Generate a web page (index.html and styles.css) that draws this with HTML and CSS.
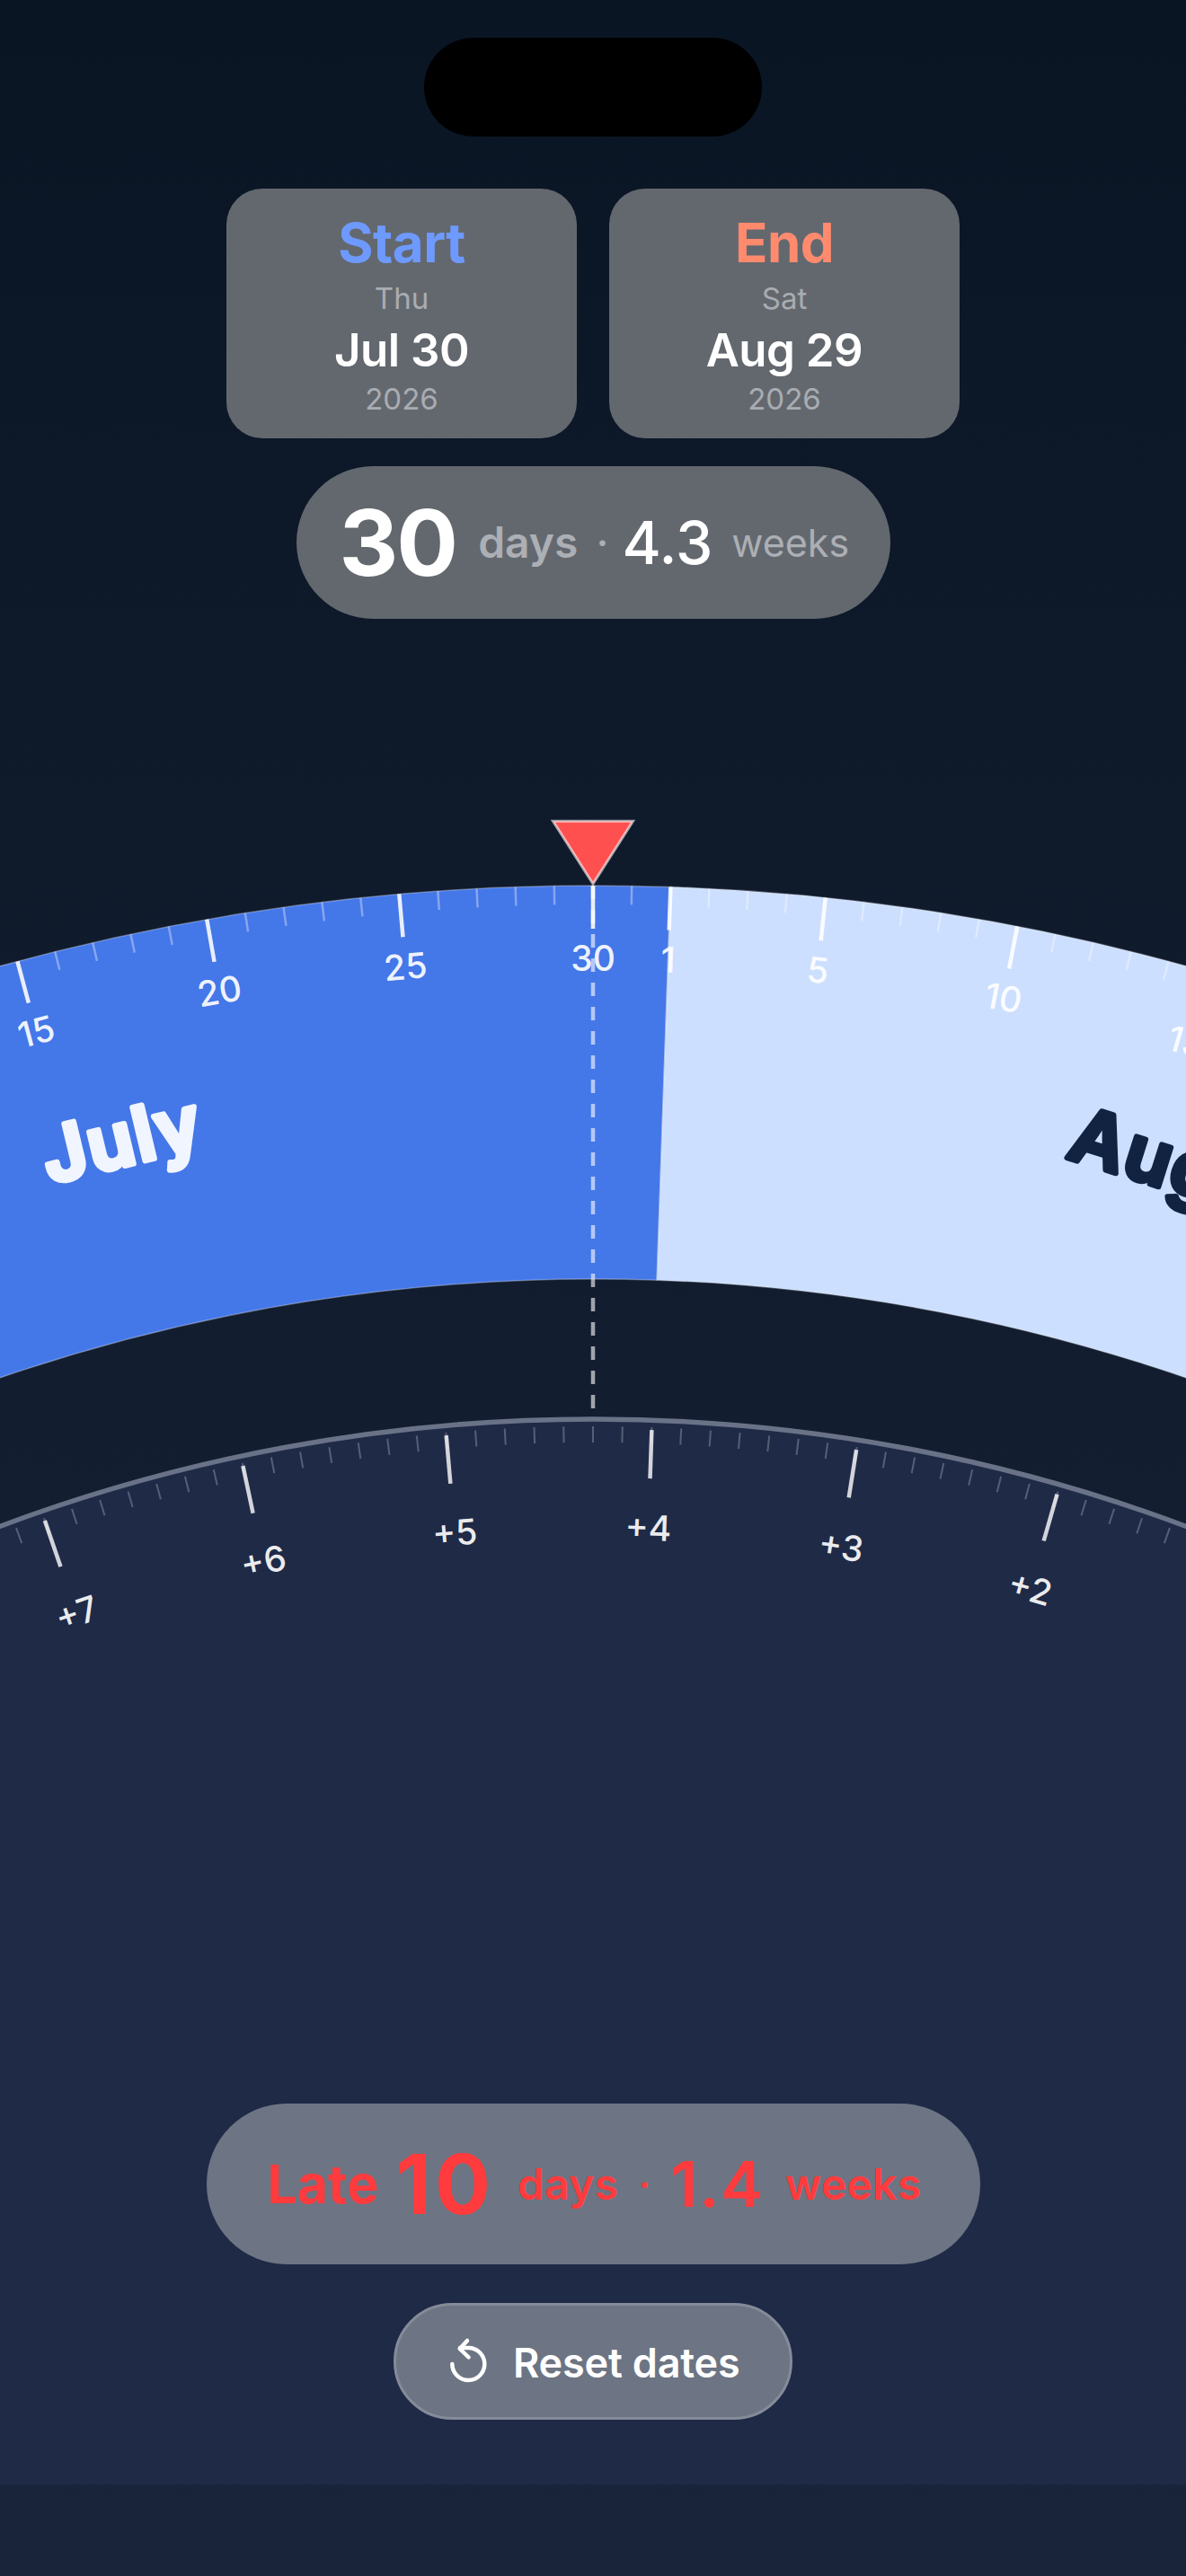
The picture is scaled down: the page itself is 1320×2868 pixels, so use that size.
FILE: index.html
```html
<!DOCTYPE html>
<html lang="en">
<head>
<meta charset="utf-8">
<title>Date dial</title>
<link rel="stylesheet" href="styles.css">
</head>
<body>
<main class="screen">
  <svg class="dial-canvas" viewBox="0 0 1320 2766" width="1320" height="2766">
    <defs>
      <line id="wheel-minor" class="tick-minor" x1="0" y1="-2475" x2="0" y2="-2454"/>
      <line id="wheel-major" class="tick-major" x1="0" y1="-2475" x2="0" y2="-2427"/>
      <line id="lower-minor" class="lower-minor" x1="0" y1="-1877" x2="0" y2="-1859"/>
      <line id="lower-major" class="lower-major" x1="0" y1="-1874" x2="0" y2="-1820"/>
    </defs>

    <g transform="translate(660 3461)">
      <path class="band-july" d="M-846.5 -2325.74A2475 2475 0 0 1 86.38 -2473.49L71.09 -2035.76A2037 2037 0 0 0 -696.69 -1914.15Z"/>
      <path class="band-august" d="M86.38 -2473.49A2475 2475 0 0 1 846.5 -2325.74L696.69 -1914.15A2037 2037 0 0 0 71.09 -2035.76Z"/>

      <use href="#wheel-minor" transform="rotate(-14)"/>
      <use href="#wheel-minor" transform="rotate(-13)"/>
      <use href="#wheel-minor" transform="rotate(-12)"/>
      <use href="#wheel-minor" transform="rotate(-11)"/>
      <use href="#wheel-minor" transform="rotate(-9)"/>
      <use href="#wheel-minor" transform="rotate(-8)"/>
      <use href="#wheel-minor" transform="rotate(-7)"/>
      <use href="#wheel-minor" transform="rotate(-6)"/>
      <use href="#wheel-minor" transform="rotate(-4)"/>
      <use href="#wheel-minor" transform="rotate(-3)"/>
      <use href="#wheel-minor" transform="rotate(-2)"/>
      <use href="#wheel-minor" transform="rotate(-1)"/>
      <use href="#wheel-minor" transform="rotate(1)"/>
      <use href="#wheel-minor" transform="rotate(3)"/>
      <use href="#wheel-minor" transform="rotate(4)"/>
      <use href="#wheel-minor" transform="rotate(5)"/>
      <use href="#wheel-minor" transform="rotate(7)"/>
      <use href="#wheel-minor" transform="rotate(8)"/>
      <use href="#wheel-minor" transform="rotate(9)"/>
      <use href="#wheel-minor" transform="rotate(10)"/>
      <use href="#wheel-minor" transform="rotate(12)"/>
      <use href="#wheel-minor" transform="rotate(13)"/>
      <use href="#wheel-minor" transform="rotate(14)"/>
      <use href="#wheel-minor" transform="rotate(15)"/>

      <use href="#wheel-major" transform="rotate(-15)"/>
      <use href="#wheel-major" transform="rotate(-10)"/>
      <use href="#wheel-major" transform="rotate(-5)"/>
      <use href="#wheel-major" transform="rotate(0)"/>
      <use href="#wheel-major" transform="rotate(2)"/>
      <use href="#wheel-major" transform="rotate(6)"/>
      <use href="#wheel-major" transform="rotate(11)"/>
      <use href="#wheel-major" transform="rotate(16)"/>

      <text class="day-label" y="-2380" transform="rotate(-15)">15</text>
      <text class="day-label" y="-2380" transform="rotate(-10)">20</text>
      <text class="day-label" y="-2380" transform="rotate(-5)">25</text>
      <text class="day-label" y="-2380" transform="rotate(0)">30</text>
      <text class="day-label" y="-2380" transform="rotate(2)">1</text>
      <text class="day-label" y="-2380" transform="rotate(6)">5</text>
      <text class="day-label" y="-2380" transform="rotate(11)">10</text>
      <text class="day-label" y="-2380" transform="rotate(16)">15</text>

      <text class="month-label month-july" y="-2225" transform="rotate(-13.45)">July</text>
      <text class="month-label month-august" y="-2230" transform="rotate(17.5)">August</text>
    </g>

    <line class="guide" x1="660" y1="986" x2="660" y2="1568"/>

    <g transform="translate(660 3465)">
      <circle class="lower-disc" cx="0" cy="0" r="1885"/>
      <use href="#lower-minor" transform="rotate(-20)"/>
      <use href="#lower-minor" transform="rotate(-19)"/>
      <use href="#lower-minor" transform="rotate(-18)"/>
      <use href="#lower-minor" transform="rotate(-17)"/>
      <use href="#lower-minor" transform="rotate(-16)"/>
      <use href="#lower-minor" transform="rotate(-15)"/>
      <use href="#lower-minor" transform="rotate(-14)"/>
      <use href="#lower-minor" transform="rotate(-13)"/>
      <use href="#lower-minor" transform="rotate(-12)"/>
      <use href="#lower-minor" transform="rotate(-11)"/>
      <use href="#lower-minor" transform="rotate(-10)"/>
      <use href="#lower-minor" transform="rotate(-9)"/>
      <use href="#lower-minor" transform="rotate(-8)"/>
      <use href="#lower-minor" transform="rotate(-7)"/>
      <use href="#lower-minor" transform="rotate(-6)"/>
      <use href="#lower-minor" transform="rotate(-5)"/>
      <use href="#lower-minor" transform="rotate(-4)"/>
      <use href="#lower-minor" transform="rotate(-3)"/>
      <use href="#lower-minor" transform="rotate(-2)"/>
      <use href="#lower-minor" transform="rotate(-1)"/>
      <use href="#lower-minor" transform="rotate(0)"/>
      <use href="#lower-minor" transform="rotate(1)"/>
      <use href="#lower-minor" transform="rotate(2)"/>
      <use href="#lower-minor" transform="rotate(3)"/>
      <use href="#lower-minor" transform="rotate(4)"/>
      <use href="#lower-minor" transform="rotate(5)"/>
      <use href="#lower-minor" transform="rotate(6)"/>
      <use href="#lower-minor" transform="rotate(7)"/>
      <use href="#lower-minor" transform="rotate(8)"/>
      <use href="#lower-minor" transform="rotate(9)"/>
      <use href="#lower-minor" transform="rotate(10)"/>
      <use href="#lower-minor" transform="rotate(11)"/>
      <use href="#lower-minor" transform="rotate(12)"/>
      <use href="#lower-minor" transform="rotate(13)"/>
      <use href="#lower-minor" transform="rotate(14)"/>
      <use href="#lower-minor" transform="rotate(15)"/>
      <use href="#lower-minor" transform="rotate(16)"/>
      <use href="#lower-minor" transform="rotate(17)"/>
      <use href="#lower-minor" transform="rotate(18)"/>
      <use href="#lower-minor" transform="rotate(19)"/>
      <use href="#lower-minor" transform="rotate(20)"/>

      <use href="#lower-major" transform="rotate(-19)"/>
      <use href="#lower-major" transform="rotate(-12)"/>
      <use href="#lower-major" transform="rotate(-5)"/>
      <use href="#lower-major" transform="rotate(2)"/>
      <use href="#lower-major" transform="rotate(9)"/>
      <use href="#lower-major" transform="rotate(16)"/>

      <text class="week-label" y="-1751" transform="rotate(-19)">+7</text>
      <text class="week-label" y="-1751" transform="rotate(-12)">+6</text>
      <text class="week-label" y="-1751" transform="rotate(-5)">+5</text>
      <text class="week-label" y="-1751" transform="rotate(2)">+4</text>
      <text class="week-label" y="-1751" transform="rotate(9)">+3</text>
      <text class="week-label" y="-1751" transform="rotate(16)">+2</text>
    </g>

    <polygon class="needle" points="615.5,914.2 704.5,914.2 660,984"/>
  </svg>

  <div class="island"></div>

  <section class="date-cards">
    <article class="date-card">
      <h2 class="card-title title-start">Start</h2>
      <p class="card-meta">Thu</p>
      <p class="card-date">Jul 30</p>
      <p class="card-meta">2026</p>
    </article>
    <article class="date-card">
      <h2 class="card-title title-end">End</h2>
      <p class="card-meta">Sat</p>
      <p class="card-date">Aug 29</p>
      <p class="card-meta">2026</p>
    </article>
  </section>

  <div class="summary-pill">
    <span class="big-num">30</span>
    <span class="unit-strong">days</span>
    <span class="dot">·</span>
    <span class="mid-num">4.3</span>
    <span class="unit-light">weeks</span>
  </div>

  <div class="controls">
    <div class="late-pill">
      <span class="late-word">Late</span>
      <span class="late-big">10</span>
      <span class="unit-late">days</span>
      <span class="dot dot-late">·</span>
      <span class="late-mid">1.4</span>
      <span class="unit-late">weeks</span>
    </div>
    <button class="reset-btn" type="button">
      <svg class="reset-icon" viewBox="0 0 70 70" width="70" height="70" aria-hidden="true">
        <path d="M13.3 37A18 18 0 1 0 31.3 19H22"/>
        <path d="M30 11L21.7 20L31.6 29.5"/>
      </svg>
      <span>Reset dates</span>
    </button>
  </div>
</main>
</body>
</html>
```

FILE: styles.css
```css
* { box-sizing: border-box; }
html, body { margin: 0; padding: 0; }
body { background: #19243a; font-family: Inter, "Liberation Sans", sans-serif; }

.screen {
  position: relative;
  width: 1320px;
  height: 2868px;
  overflow: hidden;
  display: flex;
  flex-direction: column;
  align-items: center;
  padding-top: 42px;
  background: linear-gradient(180deg, #0a1524 0%, #19243a 100%);
}

.dial-canvas { position: absolute; left: 0; top: 0; display: block; }

.band-july { fill: #4477e8; stroke: rgba(255,255,255,.3); stroke-width: 1.5; }
.band-august { fill: #ccdfff; stroke: rgba(255,255,255,.3); stroke-width: 1.5; }

.tick-minor { stroke: rgba(255,255,255,.35); stroke-width: 2.5; }
.tick-major { stroke: rgba(255,255,255,.88); stroke-width: 4.5; }
.lower-minor { stroke: rgba(255,255,255,.25); stroke-width: 2; }
.lower-major { stroke: rgba(255,255,255,.8); stroke-width: 4.5; }

.day-label {
  font-size: 39px;
  font-weight: 500;
  text-anchor: middle;
  fill: rgba(255,255,255,.92);
}
.week-label {
  font-size: 39px;
  font-weight: 500;
  text-anchor: middle;
  fill: rgba(255,255,255,.92);
}
.month-label {
  font-size: 84px;
  font-weight: 600;
  letter-spacing: 2px;
  text-anchor: middle;
  stroke-width: 6;
  stroke-linejoin: round;
  stroke-linecap: round;
}
.month-july { fill: #f0f5ff; stroke: #f0f5ff; }
.month-august { fill: #122241; stroke: #122241; }

.guide { stroke: rgba(255,255,255,.6); stroke-width: 4.5; stroke-dasharray: 15 12; }
.lower-disc { fill: #1f2a47; stroke: #697287; stroke-width: 5.5; }
.needle { fill: #ff5050; stroke: rgba(255,255,255,.62); stroke-width: 3; stroke-linejoin: miter; }

.island {
  position: relative;
  width: 376px;
  height: 110px;
  border-radius: 55px;
  background: #000;
}

.date-cards {
  position: relative;
  display: flex;
  gap: 36px;
  margin-top: 58px;
}
.date-card {
  width: 390px;
  height: 278px;
  padding-top: 24px;
  border-radius: 40px;
  background: #63686f;
  display: flex;
  flex-direction: column;
  align-items: center;
  gap: 6px;
}
.card-title, .card-meta, .card-date { margin: 0; }
.card-title { font-size: 60px; line-height: 72px; font-weight: 700; letter-spacing: -.5px; }
.title-start { color: #6e9aff; }
.title-end { color: #ff8a6e; }
.card-meta { font-size: 33px; line-height: 40px; font-weight: 400; color: #a9acb1; }
.card-date { margin-top: 2px; margin-bottom: -2px; font-size: 51px; line-height: 60px; font-weight: 600; color: #fff; letter-spacing: -.5px; }

.summary-pill {
  position: relative;
  margin-top: 31px;
  height: 170px;
  width: 661px;
  padding-left: 48px;
  border-radius: 85px;
  background: #63686f;
  display: flex;
  align-items: center;
  line-height: 1;
}
.big-num { margin-right: 24px; font-size: 102px; font-weight: 700; color: #fff; letter-spacing: -2px; }
.mid-num { margin-right: 21px; font-size: 66px; font-weight: 500; color: #fff; }
.unit-strong { margin-right: 24px; font-size: 48px; font-weight: 600; color: #acafb4; }
.unit-light { font-size: 43px; font-weight: 400; color: #acafb4; }
.dot { width: 6px; margin-right: 19px; display: flex; justify-content: center; font-size: 42px; font-weight: 600; color: #acafb4; }

.controls {
  position: relative;
  margin-top: auto;
  padding-bottom: 174px;
  display: flex;
  flex-direction: column;
  align-items: center;
  gap: 43px;
}
.late-pill {
  width: 861px;
  height: 179px;
  padding-left: 68px;
  border-radius: 89px;
  background: #6d7483;
  color: #ff3b3d;
  display: flex;
  align-items: center;
  line-height: 1;
}
.late-word { margin-right: 19px; font-size: 59px; font-weight: 700; }
.late-big { margin-right: 26px; font-size: 92px; font-weight: 700; letter-spacing: 4px; }
.late-mid { margin-right: 23px; font-size: 70px; font-weight: 600; letter-spacing: 2px; }
.unit-late { font-size: 48px; font-weight: 600; letter-spacing: .3px; }
.late-big + .unit-late { margin-right: 26px; }
.dot-late { margin-right: 26px; color: #ff3b3d; }

.reset-btn {
  width: 444px;
  height: 130px;
  padding: 2px 0 0 49px;
  border: 3px solid #858b99;
  border-radius: 65px;
  background: #6d7483;
  color: #fff;
  display: flex;
  align-items: center;
  gap: 11px;
  font: 600 45px Inter, "Liberation Sans", sans-serif;
  letter-spacing: -.2px;
}
.reset-icon { flex: none; fill: none; stroke: #fff; stroke-width: 4.5; stroke-linecap: round; stroke-linejoin: round; }
```
